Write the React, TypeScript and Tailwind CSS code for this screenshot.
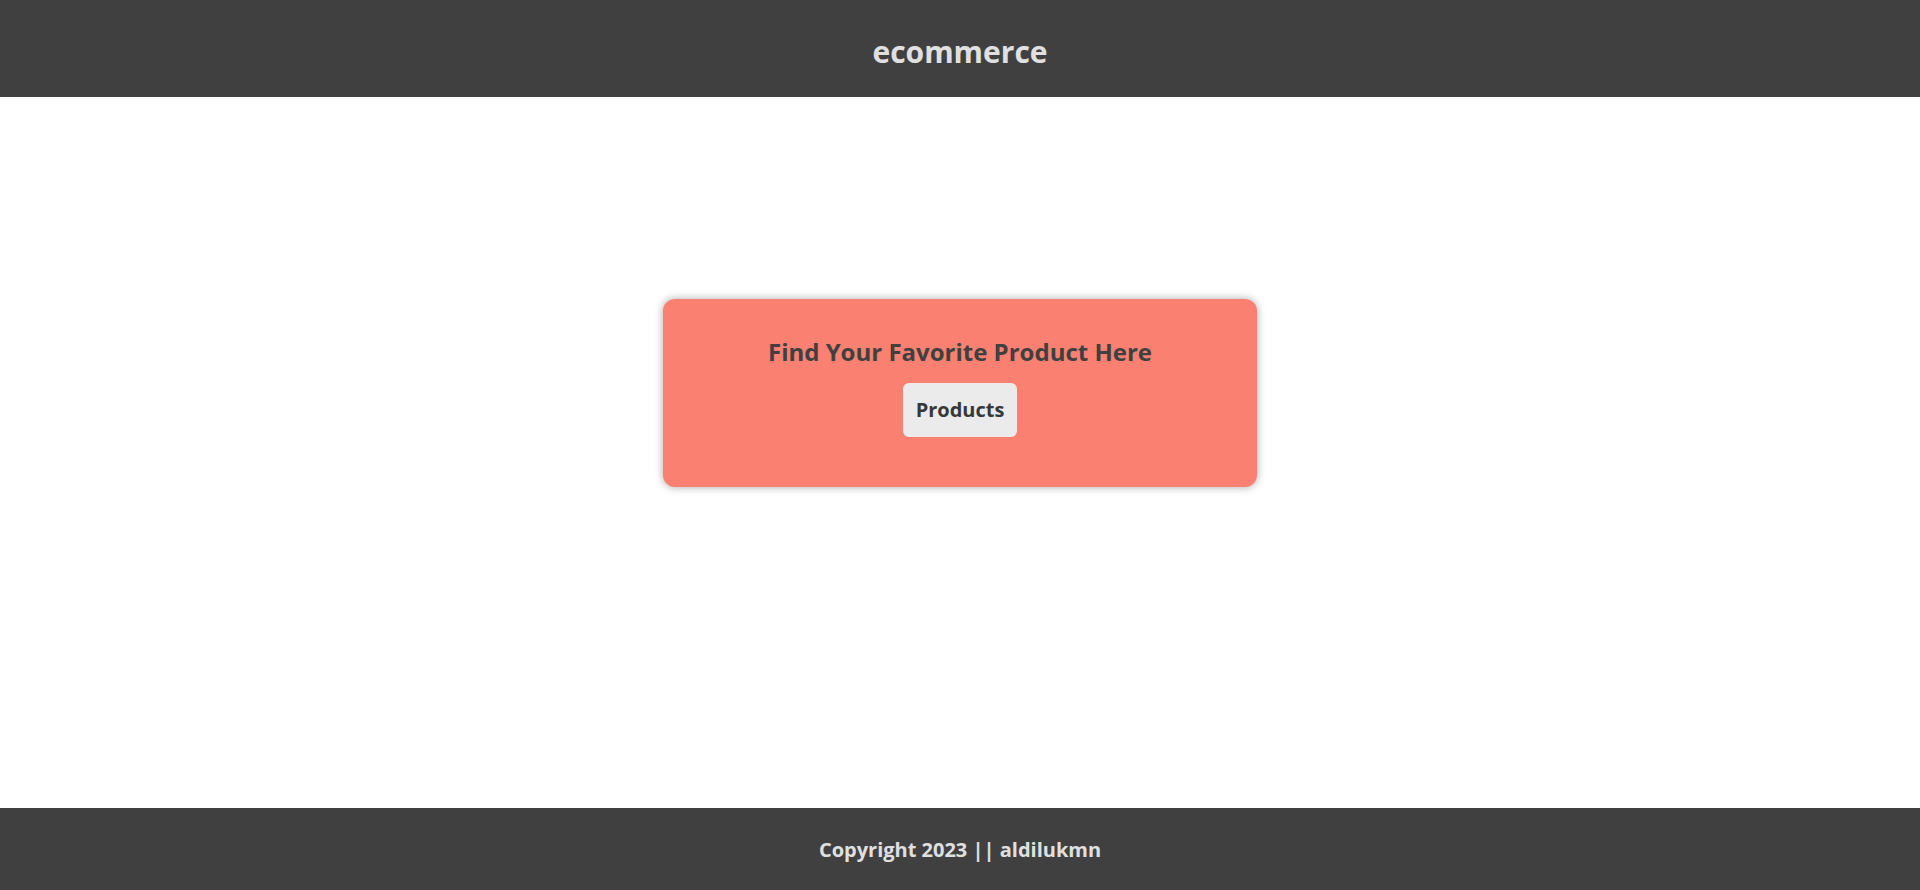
export default function App() {
  return (
    <div className="flex min-h-[890px] flex-col bg-white font-['Open_Sans',sans-serif]">
      <header className="flex h-[97px] items-center justify-center bg-[#404040] pt-[5px]">
        <h1 className="text-[30px] font-bold text-[#e0e0e0]">ecommerce</h1>
      </header>
      <main className="flex flex-1 justify-center pt-[202px]">
        <div className="flex h-[188px] w-[594px] flex-col items-center rounded-[12px] bg-[#fa8072] pt-[38px] shadow-[0_0_8px_rgba(0,0,0,0.35)]">
          <h2 className="text-[24px] font-bold leading-[30px] text-[#404040]">Find Your Favorite Product Here</h2>
          <button className="mt-[16px] h-[54px] rounded-[6px] bg-[#ebebeb] px-[13px] text-[20px] font-bold text-[#383838]">Products</button>
        </div>
      </main>
      <footer className="flex h-[82px] items-center justify-center bg-[#404040] pt-[1px]">
        <p className="text-[20px] font-bold text-[#e0e0e0]">Copyright 2023 || aldilukmn</p>
      </footer>
    </div>
  );
}
